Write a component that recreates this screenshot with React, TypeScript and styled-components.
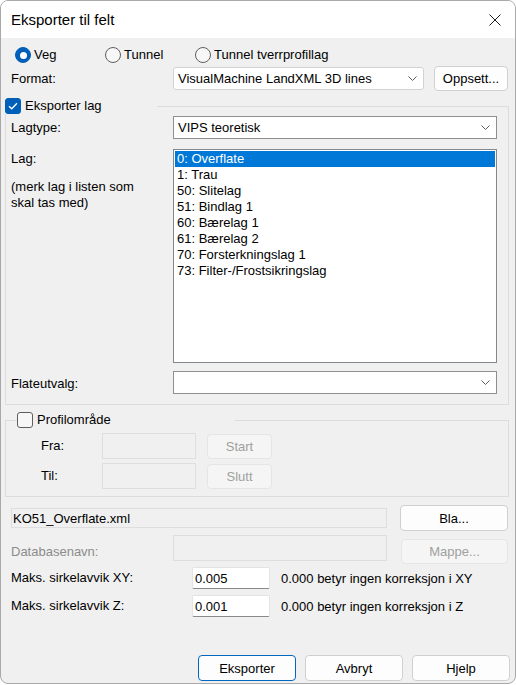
import styled, { createGlobalStyle } from "styled-components";

const GlobalStyle = createGlobalStyle`
  html, body {
    margin: 0;
    padding: 0;
    background: #ffffff;
  }
  body {
    font-family: "Liberation Sans", Arial, sans-serif;
    font-size: 13px;
    color: #000000;
  }
  * {
    box-sizing: border-box;
  }
`;

const layers = [
  "0: Overflate",
  "1: Trau",
  "50: Slitelag",
  "51: Bindlag 1",
  "60: Bærelag 1",
  "61: Bærelag 2",
  "70: Forsterkningslag 1",
  "73: Filter-/Frostsikringslag",
];

const Chevron = () => (
  <svg width="9" height="5" viewBox="0 0 9 5">
    <polyline points="0.5,0.5 4.5,4.5 8.5,0.5" fill="none" stroke="#5a5a5a" strokeWidth="1" />
  </svg>
);

const Check = () => (
  <svg width="10" height="8" viewBox="0 0 10 8">
    <polyline points="1,4.2 3.7,6.8 9,1.2" fill="none" stroke="#ffffff" strokeWidth="1.3" />
  </svg>
);

const App = () => {
  return (
    <>
      <GlobalStyle />
      <Window>
        <TitleBar>
          <Title>Eksporter til felt</Title>
          <svg width="12" height="12" viewBox="0 0 12 12">
            <path d="M0.5 0.5 L11.5 11.5 M11.5 0.5 L0.5 11.5" stroke="#1b1b1b" strokeWidth="1" />
          </svg>
        </TitleBar>
        <Body>
          <RadioRow>
            <RadioItem>
              <RadioCircle $checked />
              Veg
            </RadioItem>
            <RadioItem>
              <RadioCircle $checked={false} />
              Tunnel
            </RadioItem>
            <RadioItem>
              <RadioCircle $checked={false} />
              Tunnel tverrprofillag
            </RadioItem>
          </RadioRow>

          <FormatRow>
            <FieldLabel $width={168} $indent={6}>
              Format:
            </FieldLabel>
            <Combo $width={251} $height={23} $modern>
              <span>VisualMachine LandXML 3D lines</span>
              <Chevron />
            </Combo>
            <Button $width={74} $height={25} $gap={10}>
              Oppsett...
            </Button>
          </FormatRow>

          <Group $top={7}>
            <GroupLegend $offset={-1} $width={152}>
              <CheckBox $checked>
                <Check />
              </CheckBox>
              Eksporter lag
            </GroupLegend>
            <LayerContent>
              <ControlRow>
                <FieldLabel $width={167} $indent={5}>
                  Lagtype:
                </FieldLabel>
                <Combo $width={324} $height={23}>
                  <span>VIPS teoretisk</span>
                  <Chevron />
                </Combo>
              </ControlRow>

              <ListRow>
                <LabelStack>
                  <div>Lag:</div>
                  <Hint>
                    (merk lag i listen som
                    <br />
                    skal tas med)
                  </Hint>
                </LabelStack>
                <ListBox>
                  {layers.map((layer, i) => (
                    <ListItem key={layer} $selected={i === 0}>
                      {layer}
                    </ListItem>
                  ))}
                </ListBox>
              </ListRow>

              <ControlRow $top={8}>
                <FieldLabel $width={167} $indent={5} $shift={2}>
                  Flateutvalg:
                </FieldLabel>
                <Combo $width={324} $height={23}>
                  <span />
                  <Chevron />
                </Combo>
              </ControlRow>
            </LayerContent>
          </Group>

          <Group $top={7}>
            <GroupLegend $offset={11} $width={218}>
              <CheckBox $checked={false} />
              Profilområde
            </GroupLegend>
            <ProfileContent>
              <ProfileRow>
                <FieldLabel $width={61}>Fra:</FieldLabel>
                <TextBox $width={94} $height={26} $disabled />
                <Button $width={65} $height={25} $gap={11} disabled>
                  Start
                </Button>
              </ProfileRow>
              <ProfileRow $top={4}>
                <FieldLabel $width={61}>Til:</FieldLabel>
                <TextBox $width={94} $height={26} $disabled />
                <Button $width={65} $height={25} $gap={11} disabled>
                  Slutt
                </Button>
              </ProfileRow>
            </ProfileContent>
          </Group>

          <FileRow>
            <TextBox $width={376} $height={20} $disabled>
              KO51_Overflate.xml
            </TextBox>
            <Button $width={108} $height={26} $gap={13}>
              Bla...
            </Button>
          </FileRow>

          <DatabaseRow>
            <FieldLabel $width={162} $muted $shift={9}>
              Databasenavn:
            </FieldLabel>
            <TextBox $width={214} $height={26} $disabled />
            <Button $width={107} $height={25} $gap={14} $shift={4} disabled>
              Mappe...
            </Button>
          </DatabaseRow>

          <ToleranceRow $top={3}>
            <FieldLabel $width={181}>Maks. sirkelavvik XY:</FieldLabel>
            <NumberBox>0.005</NumberBox>
            <Note>0.000 betyr ingen korreksjon i XY</Note>
          </ToleranceRow>
          <ToleranceRow $top={6}>
            <FieldLabel $width={181}>Maks. sirkelavvik Z:</FieldLabel>
            <NumberBox>0.001</NumberBox>
            <Note>0.000 betyr ingen korreksjon i Z</Note>
          </ToleranceRow>

          <ButtonRow>
            <Button $width={98} $height={26} $primary>
              Eksporter
            </Button>
            <Button $width={98} $height={26}>
              Avbryt
            </Button>
            <Button $width={98} $height={26}>
              Hjelp
            </Button>
          </ButtonRow>
        </Body>
      </Window>
    </>
  );
};

export default App;

const Window = styled.div`
  width: 516px;
  height: 684px;
  border: 1px solid #a9a9a9;
  border-radius: 8px;
  overflow: hidden;
  display: flex;
  flex-direction: column;
  background-color: #f0f0f0;
`;

const TitleBar = styled.div`
  height: 37px;
  flex-shrink: 0;
  display: flex;
  align-items: center;
  justify-content: space-between;
  padding: 0 14px 0 10px;
  background-color: #ffffff;
`;

const Title = styled.span`
  font-size: 15px;
  color: #000000;
`;

const Body = styled.div`
  flex: 1;
  display: flex;
  flex-direction: column;
  padding: 0 6px 0 4px;
`;

const RadioRow = styled.div`
  margin-top: 9px;
  padding-left: 10px;
  height: 16px;
  display: grid;
  grid-template-columns: 90px 90px auto;
  align-items: center;
`;

const RadioItem = styled.label`
  display: flex;
  align-items: center;
  gap: 3px;
  line-height: 16px;
`;

const RadioCircle = styled.span<{ $checked: boolean }>`
  width: 16px;
  height: 16px;
  border-radius: 50%;
  display: flex;
  align-items: center;
  justify-content: center;
  background-color: ${(p) => (p.$checked ? "#005fb8" : "#f7f7f7")};
  border: 1px solid ${(p) => (p.$checked ? "#005fb8" : "#5f5f5f")};
  &::after {
    content: "";
    display: ${(p) => (p.$checked ? "block" : "none")};
    width: 7px;
    height: 7px;
    border-radius: 50%;
    background-color: #ffffff;
  }
`;

const FormatRow = styled.div`
  margin-top: 3px;
  height: 25px;
  display: flex;
  align-items: center;
`;

const FieldLabel = styled.span<{
  $width: number;
  $indent?: number;
  $muted?: boolean;
  $shift?: number;
}>`
  flex-shrink: 0;
  width: ${(p) => p.$width}px;
  padding-left: ${(p) => p.$indent ?? 0}px;
  padding-top: ${(p) => p.$shift ?? 0}px;
  line-height: 16px;
  color: ${(p) => (p.$muted ? "#8c8c8c" : "#000000")};
  white-space: nowrap;
`;

const Combo = styled.div<{ $width: number; $height: number; $modern?: boolean }>`
  width: ${(p) => p.$width}px;
  height: ${(p) => p.$height}px;
  display: flex;
  align-items: center;
  justify-content: space-between;
  padding: 0 6px 0 4px;
  background-color: #ffffff;
  border: 1px solid ${(p) => (p.$modern ? "#d2d2d2" : "#8f8f8f")};
  border-radius: ${(p) => (p.$modern ? "3px" : "0")};
  white-space: nowrap;
`;

const Button = styled.button<{
  $width: number;
  $height: number;
  $gap?: number;
  $shift?: number;
  $primary?: boolean;
}>`
  flex-shrink: 0;
  width: ${(p) => p.$width}px;
  height: ${(p) => p.$height}px;
  margin-left: ${(p) => p.$gap ?? 0}px;
  margin-top: ${(p) => p.$shift ?? 0}px;
  padding: 0;
  font-family: inherit;
  font-size: 13px;
  color: #000000;
  background-color: #fdfdfd;
  border: 1px solid ${(p) => (p.$primary ? "#0067c0" : "#d0d0d0")};
  border-radius: 4px;
  &:disabled {
    color: #a0a0a0;
    background-color: #f5f5f5;
    border-color: #e5e5e5;
  }
`;

const Group = styled.fieldset<{ $top: number }>`
  margin: ${(p) => p.$top}px 0 0 0;
  padding: 0;
  min-width: 0;
  border: 1px solid #dcdcdc;
`;

const GroupLegend = styled.legend<{ $offset: number; $width: number }>`
  margin-left: ${(p) => p.$offset}px;
  padding: 0;
  width: ${(p) => p.$width}px;
  height: 16px;
  display: flex;
  align-items: center;
  gap: 4px;
  line-height: 16px;
`;

const CheckBox = styled.span<{ $checked: boolean }>`
  width: 16px;
  height: 16px;
  border-radius: 3px;
  display: flex;
  align-items: center;
  justify-content: center;
  background-color: ${(p) => (p.$checked ? "#005fb8" : "#f7f7f7")};
  border: 1px solid ${(p) => (p.$checked ? "#005fb8" : "#5f5f5f")};
`;

const LayerContent = styled.div`
  padding: 2px 11px 10px 0;
`;

const ControlRow = styled.div<{ $top?: number }>`
  margin-top: ${(p) => p.$top ?? 0}px;
  display: flex;
  align-items: center;
`;

const ListRow = styled.div`
  margin-top: 10px;
  display: flex;
  align-items: flex-start;
`;

const LabelStack = styled.div`
  width: 167px;
  flex-shrink: 0;
  padding: 2px 0 0 5px;
  line-height: 16px;
`;

const Hint = styled.div`
  margin-top: 12px;
`;

const ListBox = styled.div`
  width: 324px;
  height: 214px;
  padding: 1px;
  background-color: #ffffff;
  border: 1px solid #828790;
`;

const ListItem = styled.div<{ $selected: boolean }>`
  height: 16px;
  line-height: 16px;
  padding-left: 2px;
  background-color: ${(p) => (p.$selected ? "#0078d7" : "transparent")};
  color: ${(p) => (p.$selected ? "#ffffff" : "#000000")};
`;

const ProfileContent = styled.div`
  padding: 5px 0 7px 35px;
`;

const ProfileRow = styled.div<{ $top?: number }>`
  margin-top: ${(p) => p.$top ?? 0}px;
  display: flex;
  align-items: center;
`;

const TextBox = styled.div<{ $width: number; $height: number; $disabled?: boolean }>`
  flex-shrink: 0;
  width: ${(p) => p.$width}px;
  height: ${(p) => p.$height}px;
  display: flex;
  align-items: center;
  padding-left: 1px;
  background-color: ${(p) => (p.$disabled ? "#f0f0f0" : "#ffffff")};
  border: 1px solid #dedede;
  white-space: nowrap;
`;

const FileRow = styled.div`
  margin-top: 8px;
  padding-left: 6px;
  height: 26px;
  display: flex;
  align-items: center;
`;

const DatabaseRow = styled.div`
  margin-top: 4px;
  padding-left: 6px;
  display: flex;
  align-items: flex-start;
`;

const ToleranceRow = styled.div<{ $top: number }>`
  margin-top: ${(p) => p.$top}px;
  padding-left: 6px;
  height: 22px;
  display: flex;
  align-items: center;
`;

const NumberBox = styled.div`
  flex-shrink: 0;
  width: 78px;
  height: 22px;
  display: flex;
  align-items: center;
  padding-left: 2px;
  background-color: #ffffff;
  border: 1px solid #e3e3e3;
  border-bottom-color: #8a8a8a;
  border-radius: 2px;
`;

const Note = styled.span`
  margin-left: 11px;
  white-space: nowrap;
`;

const ButtonRow = styled.div`
  margin-top: 38px;
  margin-right: -1px;
  display: flex;
  justify-content: flex-end;
  gap: 9px;
`;
